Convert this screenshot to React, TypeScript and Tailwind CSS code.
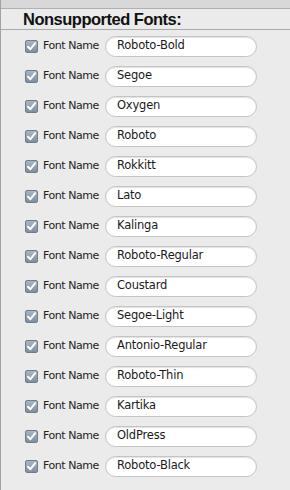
import React from "react";

const fonts = [
  "Roboto-Bold",
  "Segoe",
  "Oxygen",
  "Roboto",
  "Rokkitt",
  "Lato",
  "Kalinga",
  "Roboto-Regular",
  "Coustard",
  "Segoe-Light",
  "Antonio-Regular",
  "Roboto-Thin",
  "Kartika",
  "OldPress",
  "Roboto-Black",
];

function Check() {
  return (
    <div className="w-[13px] h-[13px] rounded-[2px] border border-[#6f7d8c] bg-gradient-to-b from-[#a9b5c2] to-[#7f8e9e] flex items-center justify-center shrink-0">
      <svg width="11" height="11" viewBox="0 0 11 11">
        <path d="M2 5.8 L4.4 8.2 L9.2 2.2" fill="none" stroke="#ffffff" strokeWidth="2" strokeLinecap="round" strokeLinejoin="round" />
      </svg>
    </div>
  );
}

export default function App() {
  return (
    <div
      className="w-[290px] h-[490px] bg-[#ebebeb] border-l border-[#a3a3a3] flex flex-col overflow-hidden"
      style={{ fontFamily: '"DejaVu Sans", sans-serif' }}
    >
      <div className="h-[9px] bg-[#d8d8d8] border-b border-[#b0b0b0] shrink-0" />
      <div className="h-[21px] border-b border-[#a9a9a9] flex items-center pl-[22px] pt-[1px] shrink-0">
        <span
          className="text-[16.5px] font-bold text-[#111] leading-none tracking-[-0.5px]"
          style={{ fontFamily: '"Liberation Sans", Arial, sans-serif' }}
        >
          Nonsupported Fonts:
        </span>
      </div>
      <div className="flex flex-col pt-[1px]">
        {fonts.map((f) => (
          <div key={f} className="h-[30px] flex items-center pl-[24px]">
            <Check />
            <span className="ml-[5px] text-[11px] text-[#222] w-[57px] whitespace-nowrap tracking-[-0.45px]">Font Name</span>
            <div className="ml-[5px] w-[152px] h-[21px] rounded-full bg-white border border-[#c4c4c4] shadow-[inset_0_1px_1px_rgba(0,0,0,0.12)] flex items-center pl-[11px]">
              <span className="text-[11.5px] text-[#1a1a1a] tracking-[-0.2px]">{f}</span>
            </div>
          </div>
        ))}
      </div>
    </div>
  );
}
